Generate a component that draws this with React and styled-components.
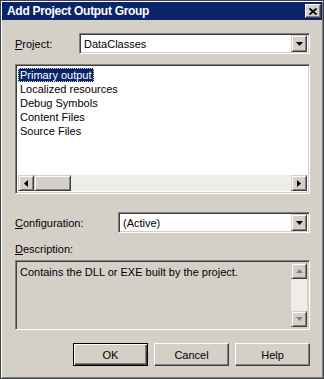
import React from 'react';
import styled, { createGlobalStyle } from 'styled-components';

const GlobalStyle = createGlobalStyle`
  html, body {
    margin: 0;
    padding: 0;
    background: #d4d0c8;
  }
  body {
    font-family: "Liberation Sans", Arial, sans-serif;
    font-size: 11px;
    color: #000;
  }
`;

const Window = styled.div`
  box-sizing: border-box;
  width: 324px;
  height: 379px;
  background: #d4d0c8;
  border: 1px solid #404040;
  box-shadow: inset 1px 1px #ffffff, inset -1px -1px #808080;
  padding: 1px;
  display: flex;
  flex-direction: column;
`;

const TitleBar = styled.div`
  height: 18px;
  background: #0a246a;
  display: flex;
  align-items: center;
  justify-content: space-between;
  padding: 0 1px 0 5px;
`;

const Title = styled.span`
  color: #fff;
  font-weight: bold;
  font-size: 12px;
  letter-spacing: -0.3px;
`;

const CloseButton = styled.div`
  box-sizing: border-box;
  width: 16px;
  height: 14px;
  background: #d4d0c8;
  border: 1px solid;
  border-color: #fff #404040 #404040 #fff;
  box-shadow: inset -1px -1px #808080;
  display: flex;
  align-items: center;
  justify-content: center;
`;

const Body = styled.div`
  flex: 1;
  display: flex;
  flex-direction: column;
  padding: 0 12px 0 13px;
`;

const FieldRow = styled.div`
  display: flex;
  align-items: center;
  margin-top: ${({ top }) => top}px;
`;

const Label = styled.label`
  width: ${({ width }) => width}px;
  flex-shrink: 0;
`;

const Sunken = styled.div`
  box-sizing: border-box;
  border: 1px solid;
  border-color: #808080 #ffffff #ffffff #808080;
  box-shadow: inset 1px 1px #404040, inset -1px -1px #d4d0c8;
  padding: 2px;
`;

const Combo = styled(Sunken)`
  flex: 1;
  height: 21px;
  background: #fff;
  display: flex;
  align-items: center;
  justify-content: space-between;
  padding: 2px 2px 2px 4px;
`;

const ArrowButton = styled.div`
  box-sizing: border-box;
  width: ${({ w }) => w || 16}px;
  height: ${({ h }) => h || 16}px;
  flex-shrink: 0;
  background: #d4d0c8;
  border: 1px solid;
  border-color: #d4d0c8 #404040 #404040 #d4d0c8;
  box-shadow: inset 1px 1px #fff, inset -1px -1px #808080;
  display: flex;
  align-items: center;
  justify-content: center;
`;

const ListBox = styled(Sunken)`
  margin-top: 10px;
  height: 130px;
  background: #fff;
  display: flex;
  flex-direction: column;
  justify-content: space-between;
`;

const Items = styled.div`
  display: flex;
  flex-direction: column;
  align-items: flex-start;
  padding: 1px 0 0;
`;

const Item = styled.div`
  height: 14px;
  line-height: 14px;
  padding: 0 2px;
  box-sizing: border-box;
  background: ${({ selected }) => (selected ? '#0a246a' : 'transparent')};
  color: ${({ selected }) => (selected ? '#fff' : '#000')};
  outline: ${({ selected }) => (selected ? '1px dotted #d4d0c8' : 'none')};
  outline-offset: -1px;
`;

const HScroll = styled.div`
  height: 16px;
  display: flex;
  background: #eeede9;
`;

const Thumb = styled(ArrowButton)`
  width: 37px;
`;

const Track = styled.div`
  flex: 1;
`;

const SectionLabel = styled.div`
  margin-top: 10px;
`;

const DescBox = styled(Sunken)`
  margin-top: 5px;
  height: 70px;
  background: #d4d0c8;
  display: flex;
  justify-content: space-between;
  padding: 2px 2px 2px 4px;
`;

const DescText = styled.div`
  padding-top: 3px;
`;

const VScroll = styled.div`
  width: 16px;
  display: flex;
  flex-direction: column;
  justify-content: space-between;
  background: #eeede9;
`;

const ButtonRow = styled.div`
  display: flex;
  justify-content: flex-end;
  gap: 6px;
  margin-top: 13px;
`;

const Button = styled.div`
  box-sizing: border-box;
  width: 75px;
  height: 23px;
  display: flex;
  align-items: center;
  justify-content: center;
  background: #d4d0c8;
  border: 1px solid;
  border-color: ${({ primary }) => (primary ? '#000' : '#fff #404040 #404040 #fff')};
  box-shadow: ${({ primary }) =>
    primary
      ? 'inset 1px 1px #fff, inset -1px -1px #404040, inset -2px -2px #808080'
      : 'inset -1px -1px #808080'};
`;

const Tri = ({ dir, color = '#000' }) => {
  const pts = {
    down: '0,0 7,0 3.5,4',
    up: '0,4 7,4 3.5,0',
    left: '4,0 4,7 0,3.5',
    right: '0,0 0,7 4,3.5',
  }[dir];
  const vertical = dir === 'up' || dir === 'down';
  return (
    <svg width={vertical ? 7 : 4} height={vertical ? 4 : 7} viewBox={vertical ? '0 0 7 4' : '0 0 4 7'}>
      <polygon points={pts} fill={color} />
    </svg>
  );
};

export default function App() {
  const items = ['Primary output', 'Localized resources', 'Debug Symbols', 'Content Files', 'Source Files'];
  return (
    <>
      <GlobalStyle />
      <Window>
        <TitleBar>
          <Title>Add Project Output Group</Title>
          <CloseButton>
            <svg width="8" height="7" viewBox="0 0 8 7">
              <path d="M0.5 0.5 L7.5 6.5 M7.5 0.5 L0.5 6.5" stroke="#000" strokeWidth="1.8" />
            </svg>
          </CloseButton>
        </TitleBar>
        <Body>
          <FieldRow top={13}>
            <Label width={64}><u>P</u>roject:</Label>
            <Combo>
              <span>DataClasses</span>
              <ArrowButton w={16} h={17}><Tri dir="down" /></ArrowButton>
            </Combo>
          </FieldRow>
          <ListBox>
            <Items>
              {items.map((it, i) => (
                <Item key={it} selected={i === 0}>{it}</Item>
              ))}
            </Items>
            <HScroll>
              <ArrowButton><Tri dir="left" /></ArrowButton>
              <Thumb />
              <Track />
              <ArrowButton><Tri dir="right" /></ArrowButton>
            </HScroll>
          </ListBox>
          <FieldRow top={18}>
            <Label width={103}><u>C</u>onfiguration:</Label>
            <Combo>
              <span>(Active)</span>
              <ArrowButton w={16} h={17}><Tri dir="down" /></ArrowButton>
            </Combo>
          </FieldRow>
          <SectionLabel><u>D</u>escription:</SectionLabel>
          <DescBox>
            <DescText>Contains the DLL or EXE built by the project.</DescText>
            <VScroll>
              <ArrowButton><Tri dir="up" color="#808080" /></ArrowButton>
              <ArrowButton><Tri dir="down" color="#808080" /></ArrowButton>
            </VScroll>
          </DescBox>
          <ButtonRow>
            <Button primary>OK</Button>
            <Button>Cancel</Button>
            <Button>Help</Button>
          </ButtonRow>
        </Body>
      </Window>
    </>
  );
}
